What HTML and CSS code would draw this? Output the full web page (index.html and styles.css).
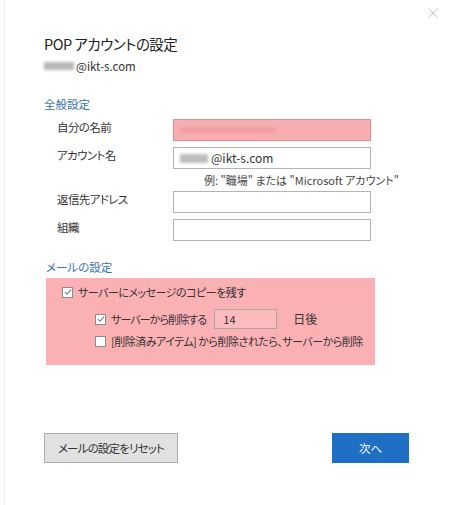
FILE: index.html
```html
<!DOCTYPE html>
<html lang="ja">
<head>
  <meta charset="UTF-8" />
  <title>POP アカウントの設定</title>
  <link rel="stylesheet" href="styles.css">
</head>
<body>
  <div class="dialog">
    <span class="close">
      <svg width="10" height="10" viewBox="0 0 10 10"><path d="M0.5 0.5 L9.5 9.5 M9.5 0.5 L0.5 9.5" stroke="#c4c4c4" stroke-width="1"/></svg>
    </span>

    <h1 class="title">POP アカウントの設定</h1>
    <div class="email"><span class="blur blur-email"></span>@ikt-s.com</div>

    <h2 class="section">全般設定</h2>
    <div class="form">
      <label class="label">自分の名前</label>
      <div class="input input-hl"><span class="blur blur-name"></span></div>

      <label class="label">アカウント名</label>
      <div class="input"><span class="blur blur-acct"></span>@ikt-s.com</div>

      <div></div>
      <div class="hint">例: "職場" または "Microsoft アカウント"</div>

      <label class="label">返信先アドレス</label>
      <div class="input"></div>

      <label class="label">組織</label>
      <div class="input"></div>
    </div>

    <h2 class="section section-mail">メールの設定</h2>
    <div class="mail-box">
      <div class="check-row">
        <span class="check">
          <svg width="8" height="8" viewBox="0 0 8 8"><path d="M1 4.2 L3.1 6.3 L7 1.6" fill="none" stroke="#7a7a7a" stroke-width="1.1"/></svg>
        </span>
        サーバーにメッセージのコピーを残す
      </div>
      <div class="check-row sub">
        <span class="check">
          <svg width="8" height="8" viewBox="0 0 8 8"><path d="M1 4.2 L3.1 6.3 L7 1.6" fill="none" stroke="#7a7a7a" stroke-width="1.1"/></svg>
        </span>
        <span class="tight">サーバーから削除する</span>
        <span class="days">14</span>
        <span class="days-label">日後</span>
      </div>
      <div class="check-row sub last">
        <span class="check"></span>
        [削除済みアイテム] から削除されたら、サーバーから削除
      </div>
    </div>

    <div class="buttons">
      <button class="btn btn-reset">メールの設定をリセット</button>
      <button class="btn btn-next">次へ</button>
    </div>
  </div>
</body>
</html>
```

FILE: styles.css
```css
body {
  margin: 0;
  background: #fff;
  font-family: "Noto Sans CJK JP", "Noto Sans", sans-serif;
  font-feature-settings: "palt" 1;
  color: #333;
}
.dialog {
  position: relative;
  width: 446px;
  height: 505px;
  box-sizing: border-box;
  padding: 33px 0 0 39px;
  border-left: 1px solid #f0f0f0;
  margin-left: 4px;
}
.close {
  position: absolute;
  top: 8px;
  right: 12px;
  line-height: 0;
}
.title {
  margin: 0;
  font-size: 14.5px;
  font-weight: normal;
  line-height: 22px;
  letter-spacing: -0.5px;
  color: #222;
}
.email {
  margin-top: 3px;
  font-size: 11.5px;
  line-height: 16px;
  color: #333;
  display: flex;
  align-items: center;
}
.blur {
  display: inline-block;
  filter: blur(1.5px);
}
.blur-email {
  width: 30px;
  height: 8px;
  background: #b8b8b8;
  margin-right: 2px;
}
.section {
  margin: 22px 0 0 0;
  font-size: 11.5px;
  font-weight: normal;
  line-height: 16px;
  color: #3a72b0;
}
.form {
  display: grid;
  grid-template-columns: 116px 198px;
  row-gap: 6px;
  margin: 7px 0 0 13px;
  align-items: center;
}
.label {
  font-size: 11.5px;
  letter-spacing: -0.6px;
  color: #333;
  align-self: start;
  line-height: 16px;
}
.input {
  box-sizing: border-box;
  height: 22px;
  border: 1px solid #b4b4b4;
  background: #fff;
  font-size: 12px;
  line-height: 20px;
  padding-left: 6px;
  display: flex;
  align-items: center;
  color: #333;
}
.input-hl {
  background: #f8aeb0;
  border-color: #e48c8f;
}
.blur-name {
  width: 96px;
  height: 6px;
  background: #f29ea1;
}
.blur-acct {
  width: 28px;
  height: 9px;
  background: #bdbdbd;
  margin-right: 3px;
}
.hint {
  font-size: 11px;
  line-height: 14px;
  color: #444;
  margin: -2px 0 -2px 31px;
  white-space: nowrap;
}
.section-mail {
  margin-top: 18px;
  margin-left: 2px;
}
.mail-box {
  margin: 3px 0 0 2px;
  width: 329px;
  height: 87px;
  box-sizing: border-box;
  background: #fbb1b3;
  padding: 6px 0 0 16px;
}
.check-row {
  display: flex;
  align-items: center;
  font-size: 11px;
  line-height: 16px;
  letter-spacing: -0.5px;
  color: #333;
  height: 16px;
  white-space: nowrap;
}
.tight {
  letter-spacing: -0.9px;
}
.check {
  box-sizing: border-box;
  width: 11px;
  height: 11px;
  border: 1px solid #8c8c8c;
  background: #fff;
  margin-right: 5px;
  display: flex;
  align-items: center;
  justify-content: center;
}
.sub {
  margin-left: 33px;
}
.check-row.sub {
  margin-top: 9px;
  height: 20px;
}
.check-row.last {
  margin-top: 2px;
}
.days {
  box-sizing: border-box;
  width: 63px;
  height: 20px;
  border: 1px solid #a8a8a8;
  background: #fcbcbe;
  margin-left: 8px;
  padding-left: 8px;
  font-size: 11px;
  line-height: 18px;
  letter-spacing: 0;
}
.days-label {
  margin-left: 16px;
  font-size: 12px;
  letter-spacing: 0;
}
.buttons {
  display: flex;
  justify-content: space-between;
  width: 365px;
  margin-top: 68px;
}
.btn {
  height: 30px;
  font-family: inherit;
  font-feature-settings: "palt" 1;
  font-size: 11.5px;
  border: 1px solid #adadad;
  padding: 0;
}
.btn-reset {
  width: 134px;
  background: #e1e1e1;
  color: #333;
  letter-spacing: -0.8px;
}
.btn-next {
  width: 77px;
  background: #1f6fc4;
  border-color: #1f6fc4;
  color: #fff;
}
```
